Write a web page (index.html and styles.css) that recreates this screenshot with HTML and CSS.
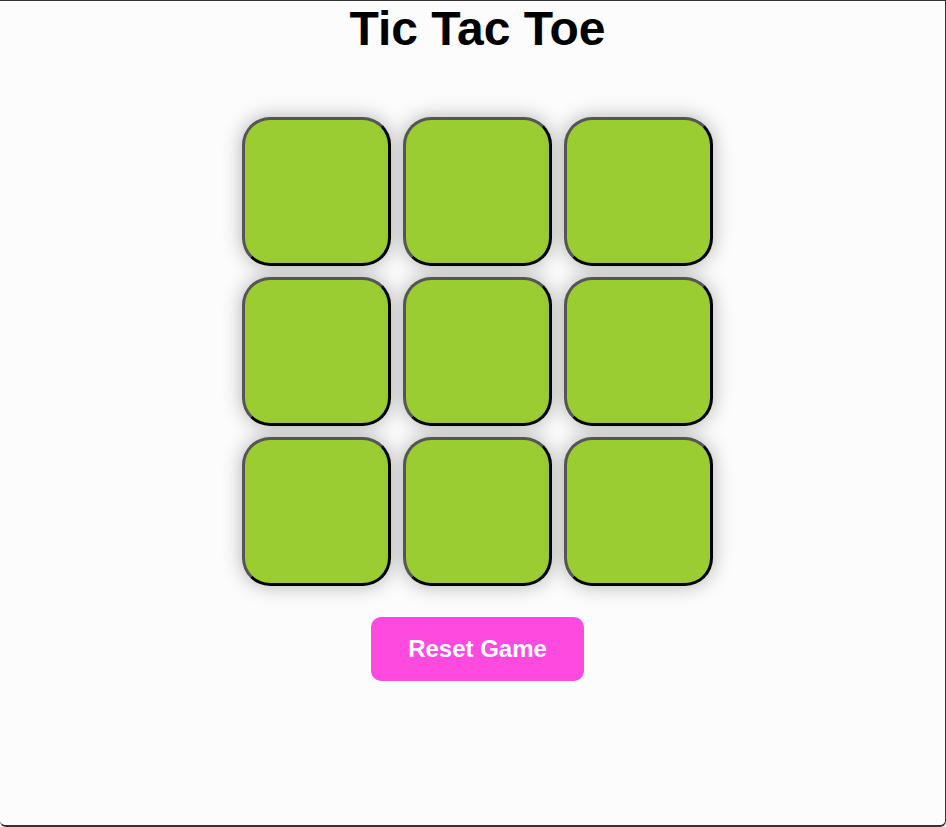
FILE: index.html
```html
<!DOCTYPE html>
<html>
<head>
<meta charset="utf-8">
<title>Tic Tac Toe</title>
<link rel="stylesheet" href="styles.css">
</head>
<body>
<div class="page">
  <h1 class="title">Tic Tac Toe</h1>
  <div class="board">
    <div class="cell"></div>
    <div class="cell"></div>
    <div class="cell"></div>
    <div class="cell"></div>
    <div class="cell"></div>
    <div class="cell"></div>
    <div class="cell"></div>
    <div class="cell"></div>
    <div class="cell"></div>
  </div>
  <button class="reset">Reset Game</button>
</div>
</body>
</html>
```

FILE: styles.css
```css
html, body {
  margin: 0;
  padding: 0;
  background: #fcfcfc;
}
.page {
  box-sizing: border-box;
  width: 946px;
  height: 827px;
  padding-left: 10px;
  border-top: 1px solid #333;
  border-right: 1px solid #333;
  border-bottom: 2px solid #333;
  border-bottom-left-radius: 6px;
  border-bottom-right-radius: 6px;
  background: #fcfcfc;
  display: flex;
  flex-direction: column;
  align-items: center;
  font-family: "Liberation Sans", Arial, sans-serif;
}
.title {
  margin: 0;
  font-size: 48px;
  font-weight: bold;
  line-height: 55px;
  color: #000;
}
.board {
  margin-top: 61px;
  display: grid;
  grid-template-columns: repeat(3, 149px);
  grid-template-rows: repeat(3, 149px);
  gap: 11px 12px;
}
.cell {
  box-sizing: border-box;
  background: #9acd32;
  border: 3px solid;
  border-color: #555 #000 #000 #555;
  border-radius: 28px;
  box-shadow: 0 0 20px rgba(0, 0, 0, 0.3);
}
.reset {
  margin-top: 31px;
  width: 213px;
  height: 64px;
  border: none;
  border-radius: 10px;
  background: #ff4ae0;
  color: #fff;
  font-family: "Liberation Sans", Arial, sans-serif;
  font-size: 24px;
  font-weight: bold;
}
```
